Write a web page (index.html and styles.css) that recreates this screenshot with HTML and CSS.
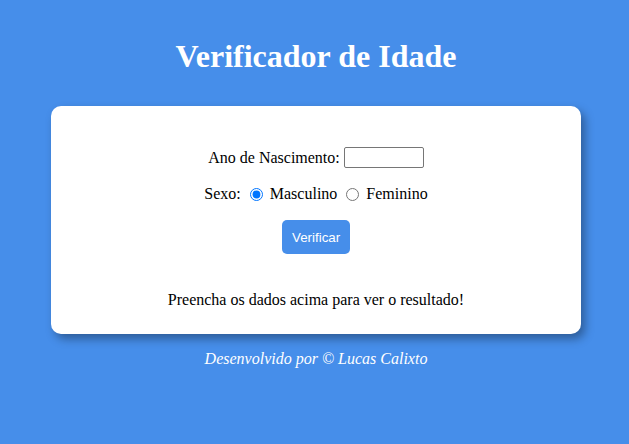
FILE: index.html
```html
<!DOCTYPE html>
<html lang="pt-BR">
<head>
<meta charset="utf-8">
<title>Verificador de Idade</title>
<link rel="stylesheet" href="styles.css">
</head>
<body>
<header class="header">
  <h1 class="title">Verificador de Idade</h1>
</header>
<main class="card">
  <div class="row row-year">
    <label for="ano">Ano de Nascimento:</label>
    <input type="number" id="ano" class="year-input">
  </div>
  <div class="row row-sex">
    <span>Sexo:</span>
    <input type="radio" name="sexo" id="masc" checked class="radio">
    <label for="masc">Masculino</label>
    <input type="radio" name="sexo" id="fem" class="radio">
    <label for="fem">Feminino</label>
  </div>
  <div class="row row-btn">
    <button class="btn" type="button">Verificar</button>
  </div>
  <div class="result">Preencha os dados acima para ver o resultado!</div>
</main>
<footer class="footer">Desenvolvido por © Lucas Calixto</footer>
</body>
</html>
```
FILE: styles.css
```css
html, body {
  margin: 0;
  padding: 0;
}
body {
  background: #468eea;
  font-family: "Liberation Serif", "Times New Roman", serif;
  font-size: 16px;
  color: #000;
  min-height: 444px;
  padding-left: 3px;
}
.header {
  padding-top: 38px;
  text-align: center;
}
.title {
  margin: 0;
  font-size: 32px;
  font-weight: bold;
  color: #fff;
  line-height: 37px;
}
.card {
  box-sizing: border-box;
  width: 530px;
  margin: 31px auto 0;
  background: #fff;
  border-radius: 10px;
  box-shadow: 4px 5px 10px rgba(0, 0, 0, 0.35);
  padding: 41px 20px 25px;
  display: flex;
  flex-direction: column;
  align-items: center;
}
.row {
  display: flex;
  align-items: center;
  justify-content: center;
}
.row-year {
  margin-bottom: 17px;
}
.row-sex {
  margin-bottom: 17px;
}
.row-btn {
  margin-bottom: 37px;
}
.year-input {
  box-sizing: border-box;
  width: 80px;
  height: 21px;
  margin-left: 4px;
  border: 1px solid #767676;
  border-radius: 2px;
  font-size: 13.33px;
  padding: 1px 2px;
}
.radio {
  margin: 0 7px 0 9px;
  width: 13px;
  height: 13px;
}
.btn {
  background: #468eea;
  color: #fff;
  border: none;
  border-radius: 5px;
  font-family: "Liberation Sans", Arial, sans-serif;
  font-size: 13.33px;
  padding: 0 10px;
  height: 34px;
  width: 68px;
}
.result {
  line-height: 18px;
  text-align: center;
}
.footer {
  text-align: center;
  color: #fff;
  font-style: italic;
  margin-top: 16px;
  line-height: 18px;
}
```
